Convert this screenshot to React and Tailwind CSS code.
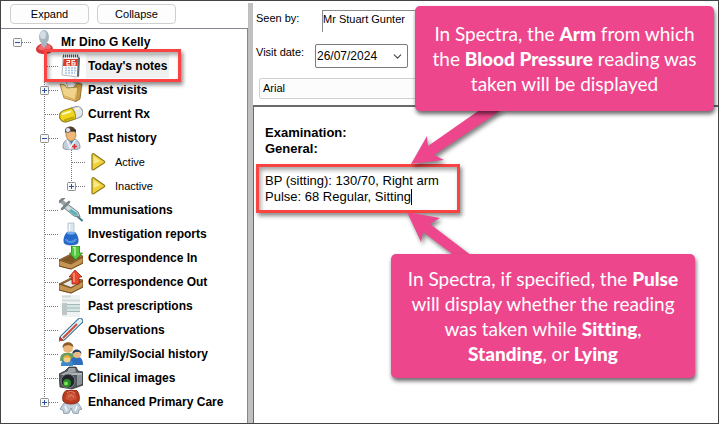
import { useState } from 'react';
import { ChevronDown } from 'lucide-react';

const ICONS = {
  person: (
    <>
      <path d="M4 20c0-4 3-5 6-7h5c4 2 6 3 6 7-1 3-5 4-9 4s-7-1-8-4z" fill="#d9363c" />
      <path d="M6 19c1-3 3-4 5-5l2 3 3-3c2 1 3 2 3 4-4 3-9 3-13 1z" fill="#ee6a6d" />
      <path d="M9 11h6v4l-3 3-3-3z" fill="#a9b4bd" />
      <ellipse cx="12" cy="7" rx="5" ry="7" fill="#a8b6c0" />
      <ellipse cx="11" cy="5" rx="3" ry="4" fill="#d3dde3" />
    </>
  ),
  calendar: (
    <>
      <path d="M4 2h16l-1 21-16-2z" fill="#f7f9fb" stroke="#a1a8af" strokeWidth=".8" />
      <path d="M19 3l2 1-1 19-2-1z" fill="#5d646b" />
      <path d="M4.500 5h14.500l-.5 7H4z" fill="#dc3a24" />
      <path d="M4 2h16" stroke="#555" strokeWidth="3" strokeDasharray="1 1" />
      <path d="M7.500 6.500h3v2h-2.500V11H11M16 6.500h-3V11h3V8.700h-3" fill="none" stroke="#fff" strokeWidth="1.100" />
      <path d="M6 14h11M6 16.500h11M6 19h10" stroke="#a7c5e4" strokeWidth="1.500" strokeDasharray="2 1" />
    </>
  ),
  folder: (
    <>
      <path d="M7 3l9-2 5 3v15l-8 3z" fill="#f4f6f8" stroke="#9ba4ad" strokeWidth=".8" />
      <path d="M15 1v4l5 0" fill="#cfd6dc" stroke="#9ba4ad" strokeWidth=".8" />
      <path d="M15 9l3-4 5 1-2 15-5 3z" fill="#c89b45" stroke="#8a6220" strokeWidth=".8" />
      <path d="M1 6l5 1 2 3 10-1 1 2-3 12-11-3z" fill="#f1d48c" stroke="#9c722a" strokeWidth=".8" />
      <path d="M5 18l11 4 2-9" fill="none" stroke="#dcb25a" strokeWidth="1.500" />
    </>
  ),
  pill: (
    <g transform="rotate(-18 12 12)">
      <rect x="0" y="6.500" width="24" height="11.500" rx="5.700" fill="#e3e6ea" stroke="#8f959b" />
      <path d="M14.500 6.500H6a5.750 5.750 0 0 0 0 11.500h8.500c2-4 2-8 0-11.500z" fill="#f0d51a" stroke="#97860f" />
      <path d="M4 9.500h8M18 9h3" stroke="#fffbd0" strokeWidth="2" strokeLinecap="round" />
      <path d="M4 16h9" stroke="#c3a60a" strokeWidth="2" strokeLinecap="round" />
    </g>
  ),
  doctor: (
    <>
      <path d="M4 22c0-6 2-8 6-9h5c4 1 6 4 6 9-4 3-14 3-17 0z" fill="#c4cfdb" stroke="#73879c" strokeWidth=".8" />
      <path d="M9 13l4 6 3-6z" fill="#3b8fd0" />
      <path d="M8 14l3 8 2-3 3-5" fill="none" stroke="#f1f5f9" strokeWidth="1.500" />
      <path d="M7 5h9l1 5c-1 3-3 5-5 5s-4-2-5-5z" fill="#efb878" stroke="#a86e34" strokeWidth=".7" />
      <path d="M6 7c-1-8 11-9 11 0l-2-2H8z" fill="#5b3c22" />
      <path d="M6 4.500h11" stroke="#323438" strokeWidth="2" />
      <circle cx="9" cy="4" r="2.500" fill="#e3e8ec" stroke="#555" strokeWidth=".8" />
      <path d="M15.500 18v5M13 20.500h5" stroke="#d63333" strokeWidth="1.500" />
    </>
  ),
  play: (
    <>
      <path d="M6 5c0-1.500 1-1.500 2-1l10 7c1 .7 1 1.300 0 2L8 19.500c-1 .5-2 .5-2-.5z" fill="#f0d13a" stroke="#8f7a1b" strokeWidth="1.200" />
      <path d="M7.500 6v8l7-3z" fill="#f9e887" />
    </>
  ),
  syringe: (
    <>
      <path d="M17 17l6.500 6" stroke="#417f87" strokeWidth="2" />
      <path d="M7 5l12 9 2 5-6-1L4 9z" fill="#cbdde0" stroke="#707b80" />
      <path d="M12 11l6 4 1 3-4-1-5-4z" fill="#5ab0b7" />
      <path d="M1 2l7 6" stroke="#9aa2a7" strokeWidth="4" />
      <path d="M0 4l5-4M3 11l7-7" stroke="#7b8489" strokeWidth="2.500" strokeLinecap="round" />
    </>
  ),
  flask: (
    <>
      <path d="M9 1h6v9c4 4 5 8 4 11-2 3-12 3-14 0-1-4 1-8 4-11z" fill="#dae5ee" stroke="#a6b4c1" strokeWidth=".7" />
      <path d="M8 10h8c3 3 4 7 3 11-2 3-12 3-14 0-1-4 0-8 3-11z" fill="#2468c8" />
      <ellipse cx="12" cy="11" rx="4" ry="1.500" fill="#75abed" />
      <path d="M7 17c1 4 8 4 10 0" fill="none" stroke="#5693e6" strokeWidth="2" />
      <path d="M10.500 2v7" stroke="#fff" />
    </>
  ),
  trayIn: (
    <>
      <path d="M0 14l12-6 12 2v7l-12 6-12-3z" fill="#a8763a" stroke="#684015" strokeWidth=".8" />
      <path d="M2 14l10-5 10 2-10 6z" fill="#805525" />
      <path d="M0 14l12 4 12-7v6l-12 6-12-3z" fill="#c49452" stroke="#684015" strokeWidth=".8" />
      <path d="M12.500 0h8v7h3l-7 7-6-7h2z" fill="#58c740" stroke="#248119" strokeWidth=".8" />
      <path d="M14 1.500h2v8" fill="none" stroke="#b5f3a2" strokeWidth="1.500" />
    </>
  ),
  trayOut: (
    <>
      <path d="M0 14l12-6 12 2v7l-12 6-12-3z" fill="#a8763a" stroke="#684015" strokeWidth=".8" />
      <path d="M2 14l10-5 10 2-10 6z" fill="#805525" />
      <path d="M4 14l8-4 8 3-8 4z" fill="#e6e9ed" />
      <path d="M0 14l12 4 12-7v6l-12 6-12-3z" fill="#c49452" stroke="#684015" strokeWidth=".8" />
      <path d="M16 0l7 7h-3v7h-7V7h-3z" fill="#e94b2e" stroke="#97230e" strokeWidth=".8" />
      <path d="M15 3v9" stroke="#ff9a7e" strokeWidth="1.500" />
    </>
  ),
  sheet: (
    <>
      <path d="M3 1h18v22H3z" fill="#eff2f2" />
      <path d="M3 2.500h9M3 6.500h18" stroke="#d3d9da" strokeWidth="2" />
      <path d="M3 9h5v12H3z" fill="#bcc6c7" />
      <path d="M8 10h13v8H8z" fill="#d2e5e1" />
      <path d="M8 10.500h13M8 14h13M8 17.500h13" stroke="#a5b9b7" />
    </>
  ),
  thermometer: (
    <>
      <path d="M4 19.500L21 3" stroke="#35718e" strokeWidth="6.500" strokeLinecap="round" />
      <path d="M4 19.500L21 3" stroke="#ddf0f7" strokeWidth="4.500" strokeLinecap="round" />
      <path d="M4 20L18 6" stroke="#d44636" strokeWidth="1.800" />
      <path d="M0 23l1-4 3 3z" fill="#b53a2d" stroke="#b53a2d" />
    </>
  ),
  family: (
    <>
      <path d="M1 19c0-6 2-8 6-8h4c4 0 5 3 5 8z" fill="#6a9d5d" />
      <circle cx="9" cy="6" r="5" fill="#ecb77b" />
      <path d="M3.500 6C3-1 14-2 14.500 5l-2-1-3-1-4 1z" fill="#8a5d2b" />
      <path d="M11 23c0-5 1-7 4-8h5c3 1 4 4 4 8z" fill="#2f6dbd" />
      <circle cx="18" cy="12" r="4" fill="#eab98a" />
      <path d="M13.500 12c-1-6 9-6 9 0l-2-2h-4z" fill="#28455f" />
      <path d="M2 24c0-4 1-6 4-6h4c3 0 4 2 4 6z" fill="#3e8ac9" />
      <circle cx="8" cy="17" r="3.500" fill="#f5cd8a" />
      <path d="M4 17c0-5 8-5 8 0l-2-1.500H6z" fill="#e3ac2e" />
    </>
  ),
  camera: (
    <>
      <path d="M0 8l6-3 4-4h7l2 4 5 1v13l-11 4-12-2z" fill="#50565b" stroke="#2e3236" strokeWidth=".8" />
      <path d="M10 2h6l1 4H8z" fill="#9ba2a8" />
      <path d="M1 9l6-3 16 1v2L9 9z" fill="#aeb5ba" />
      <path d="M18 9h5v9l-5 2z" fill="#8b9298" />
      <circle cx="9" cy="15" r="7" fill="#22262a" stroke="#7d858b" />
      <circle cx="8" cy="17" r="4" fill="#2b8a2b" />
      <circle cx="7" cy="17.500" r="2" fill="#7de34e" />
    </>
  ),
  rosette: (
    <>
      <path d="M5 13l-4 6 3 1 1 4 5-1 2-5 2 5 5 1 1-4 3-1-4-6z" fill="#c2ced9" stroke="#7f90a1" strokeWidth=".8" />
      <path d="M6 16l2 5M18 16l-2 5" stroke="#f5f8fa" strokeWidth="1.500" />
      <path d="M8 0h9c3 2 4 7 3 11-3 4-13 4-16 0-1-4 0-9 4-11z" fill="#b93a21" stroke="#7b1e10" strokeWidth=".8" />
      <path d="M8 3h8l2 6-6 2-6-2z" fill="#cb5236" />
      <path d="M8 3c2-2 5-2 8 0M9 7l3-2 3 2" fill="none" stroke="#e58b75" />
    </>
  ),
};

const TREE = [
  { icon: 'calendar', label: "Today's notes", level: 1, selected: true },
  { icon: 'folder', label: 'Past visits', level: 1, toggle: 'plus' },
  { icon: 'pill', label: 'Current Rx', level: 1 },
  { icon: 'doctor', label: 'Past history', level: 1, toggle: 'minus' },
  { icon: 'play', label: 'Active', level: 2 },
  { icon: 'play', label: 'Inactive', level: 2, toggle: 'plus', last: true },
  { icon: 'syringe', label: 'Immunisations', level: 1 },
  { icon: 'flask', label: 'Investigation reports', level: 1 },
  { icon: 'trayIn', label: 'Correspondence In', level: 1 },
  { icon: 'trayOut', label: 'Correspondence Out', level: 1 },
  { icon: 'sheet', label: 'Past prescriptions', level: 1 },
  { icon: 'thermometer', label: 'Observations', level: 1 },
  { icon: 'family', label: 'Family/Social history', level: 1 },
  { icon: 'camera', label: 'Clinical images', level: 1 },
  { icon: 'rosette', label: 'Enhanced Primary Care', level: 1, toggle: 'plus', last: true },
];

// Dotted connector lines, with the +/- box on top when the node has children
function Branch({ toggle, last, root, pass }) {
  return (
    <svg width="27" height="24" viewBox="0 0 27 24" className="block shrink-0">
      <g stroke="#777" strokeDasharray="1 1" fill="none">
        {!root && <path d={last ? 'M13.500 0v12' : 'M13.500 0v24'} />}
        {!pass && <path d="M14 12.500h13" />}
      </g>
      {toggle && (
        <>
          <rect x="9.500" y="8.500" width="8" height="8" rx="1" fill="#f8f8f8" stroke="#8f8f8f" />
          <path d={toggle === 'plus' ? 'M11 12.500h5M13.500 10v5' : 'M11 12.500h5'} stroke="#2f4fa5" />
        </>
      )}
    </svg>
  );
}

function TreeRow({ icon, label, level, toggle, last, selected }) {
  return (
    <li className="relative flex h-6 items-center pl-[3px]">
      {level > 0 && <span className="w-[27px] shrink-0" />}
      {level > 1 && <Branch pass />}
      {toggle ? (
        <button type="button" aria-label={`Toggle ${label}`} className="shrink-0">
          <Branch toggle={toggle} last={last} root={level === 0} />
        </button>
      ) : (
        <Branch last={last} />
      )}
      <svg width="24" height="24" viewBox="0 0 24 24" className="ml-px mr-[3px] shrink-0">
        {ICONS[icon]}
      </svg>
      <a
        href="#"
        className={`flex h-6 items-center px-[2px] whitespace-nowrap ${selected ? 'bg-[#f0f0f0]' : ''} ${
          level === 2 ? 'text-[11px]' : 'text-[12px] font-bold'
        }`}
      >
        {label}
      </a>
      {selected && (
        <span className="pointer-events-none absolute -top-[5px] left-[43px] z-10 h-[33px] w-[137px] border-[3px] border-[#fa4343] shadow-[2px_3px_4px_rgba(0,0,0,0.45),inset_2px_3px_4px_rgba(0,0,0,0.35)]" />
      )}
    </li>
  );
}

function Callout({ className, children }) {
  return (
    <p className={`absolute rounded-[5px] bg-[#ed468c] text-center font-['Lato',sans-serif] text-[19px] leading-[25px] whitespace-nowrap text-white shadow-[1px_3px_4px_rgba(0,0,0,0.6)] [font-variant-ligatures:none] ${className}`}>
      {children}
    </p>
  );
}

export default function App() {
  const [date, setDate] = useState('26/07/2024');

  return (
    <div className="flex min-h-screen border border-[#444] bg-white font-['Liberation_Sans',sans-serif] text-black">
      {/* Navigation tree */}
      <aside className="flex w-[247px] shrink-0 flex-col">
        <div className="flex gap-2 px-[9px] pt-[3px] pb-[4px] text-[11px]">
          <button type="button" className="h-5 w-[79px] rounded-[4px] border border-[#d0d0d0] bg-[#fdfdfd] leading-none">Expand</button>
          <button type="button" className="h-5 w-[79px] rounded-[4px] border border-[#d0d0d0] bg-[#fdfdfd] leading-none">Collapse</button>
        </div>
        <ul className="flex-1 border-t border-r border-[#828790] pt-px">
          <TreeRow icon="person" label="Mr Dino G Kelly" level={0} toggle="minus" />
          {TREE.map((node) => (
            <TreeRow key={node.label} {...node} />
          ))}
        </ul>
      </aside>

      <div className="mt-[2px] w-[5px] shrink-0 bg-[#c0c0c0]" />

      {/* Visit details and notes */}
      <main className="relative flex min-w-0 flex-1 flex-col">
        <div className="flex flex-col pt-[9px] pl-[3px] text-[11px]">
          <div className="flex items-start">
            <label htmlFor="seen" className="w-[66px] shrink-0 leading-4">Seen by:</label>
            <input id="seen" readOnly value="Mr Stuart Gunter" className="h-[22px] w-[180px] border-t border-l border-[#8c8c8c] pb-[6px] outline-none" />
          </div>
          <div className="mt-3 flex items-start">
            <label htmlFor="visit" className="w-[59px] shrink-0 leading-4">Visit date:</label>
            <div className="flex h-6 w-[93px] items-center rounded-[2px] border border-[#7a7a7a] pr-[3px] pl-px">
              <input id="visit" value={date} onChange={(e) => setDate(e.target.value)} className="w-full min-w-0 flex-1 text-[12px] outline-none" />
              <button type="button" aria-label="Open calendar">
                <ChevronDown size={13} strokeWidth={2} className="text-[#444]" />
              </button>
            </div>
          </div>
          <select aria-label="Font" className="mt-[10px] mb-[6px] ml-[3px] h-[21px] w-[300px] appearance-none rounded-[2px] border border-[#d0d0d0] bg-[#fcfcfc] pl-[3px]">
            <option>Arial</option>
          </select>
        </div>

        <div
          role="textbox"
          aria-label="Notes"
          className="flex-1 border-t-2 border-l border-[#6a6a6a] pt-[18px] pl-[11px] text-[13px] leading-4"
        >
          <p className="font-bold">Examination:</p>
          <p className="font-bold">General:</p>
          <div className="relative mt-4 w-fit whitespace-nowrap">
            <p>BP (sitting): 130/70, Right arm</p>
            <p className="flex">
              Pulse: 68 Regular, Sitting
              <span className="h-4 w-px bg-black" />
            </p>
            <span className="pointer-events-none absolute -top-[9px] -left-[9px] h-[49px] w-[204px] border-[3px] border-[#fa4343] shadow-[2px_3px_4px_rgba(0,0,0,0.45),inset_2px_3px_4px_rgba(0,0,0,0.35)]" />
          </div>
        </div>

        {/* Annotations */}
        <svg width="110" height="60" viewBox="0 0 110 60" className="absolute top-[108px] left-[154px] overflow-visible drop-shadow-[2px_3px_2px_rgba(0,0,0,0.5)]">
          <path d="M4 55L20 27l1 10L74 0h22L27 46l10 5z" fill="#ed468c" />
        </svg>
        <svg width="80" height="50" viewBox="0 0 80 50" className="absolute top-[211px] left-[152px] overflow-visible drop-shadow-[2px_3px_2px_rgba(0,0,0,0.5)]">
          <path d="M2 0l33 6-10 6 42 32H50L18 20l-2 10z" fill="#ed468c" />
        </svg>
        <Callout className="top-[5px] left-[162px] w-[299px] py-[15px]">
          In Spectra, the <b className="font-black">Arm</b> from which
          <br />
          the <b className="font-black">Blood Pressure</b> reading was
          <br />
          taken will be displayed
        </Callout>
        <Callout className="top-[253px] left-[138px] w-[304px] py-3">
          In Spectra, if specified, the <b className="font-black">Pulse</b>
          <br />
          will display whether the reading
          <br />
          was taken while <b className="font-black">Sitting</b>,
          <br />
          <b className="font-black">Standing</b>, or <b className="font-black">Lying</b>
        </Callout>
      </main>
    </div>
  );
}
